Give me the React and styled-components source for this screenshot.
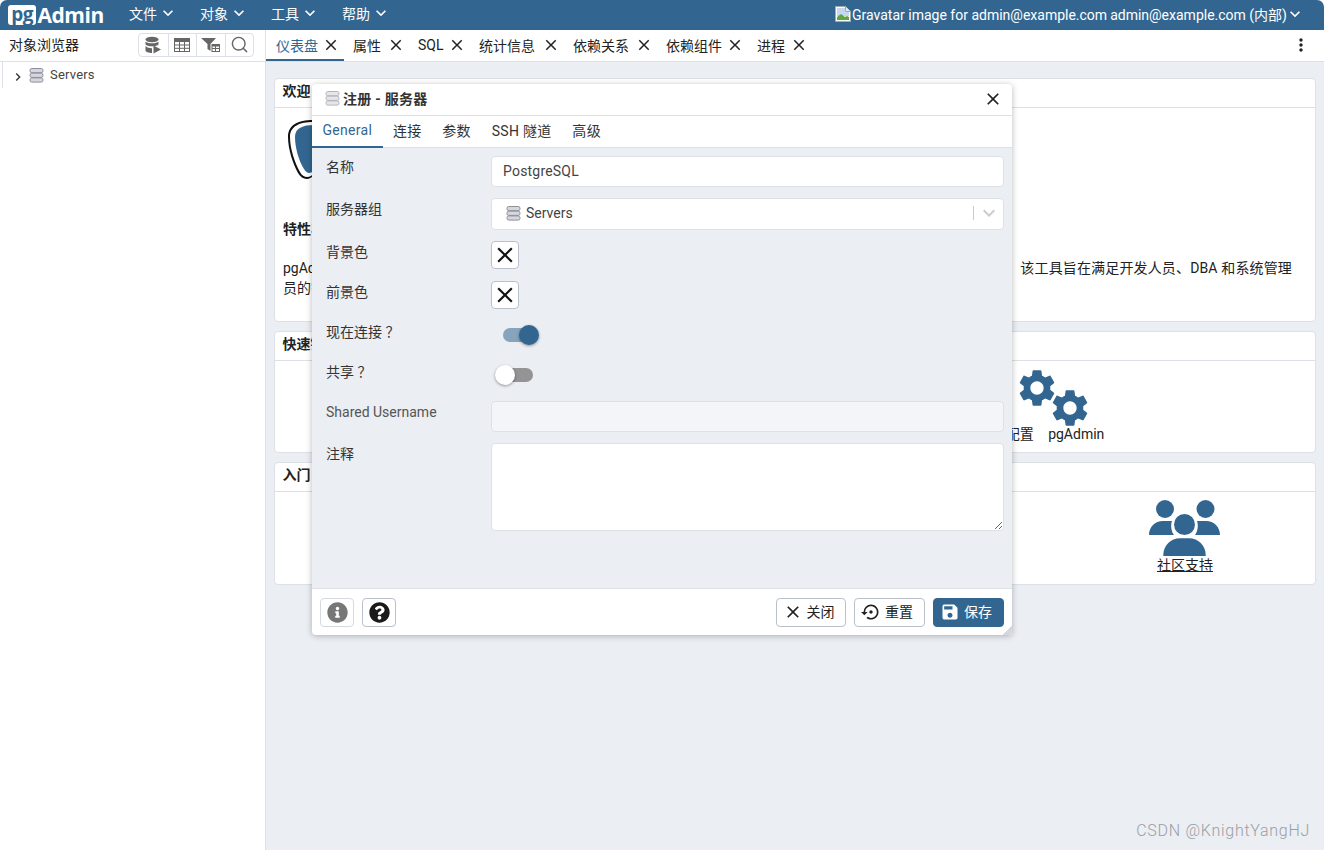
import React from 'react'
import styled, { createGlobalStyle } from 'styled-components'
import { FaInfoCircle, FaQuestionCircle, FaServer, FaBook, FaGlobe, FaRss } from 'react-icons/fa'
import { MdClose, MdExpandMore, MdChevronRight, MdMoreVert, MdSave, MdSettingsBackupRestore } from 'react-icons/md'
import { Search } from 'lucide-react'

const FONT = `Roboto, "Noto Sans CJK SC", sans-serif`
const PRIMARY = '#326690'
const BORDER = '#dde0e6'

const GlobalStyle = createGlobalStyle`
html, body {
    margin: 0;
    padding: 0;
    background: #fff;
}
* {
    box-sizing: border-box;
}
`

const Page = styled.div`
position: relative;
width: 1324px;
height: 850px;
overflow: hidden;
display: flex;
flex-direction: column;
font-family: ${FONT};
font-size: 14px;
color: #222;
background: #fff;
`

const TopBar = styled.header`
height: 30px;
flex: none;
display: flex;
align-items: center;
background: ${PRIMARY};
color: #fff;
border-radius: 7px 7px 0 0;
padding: 0 19px 2px 8px;
`
const Logo = styled.div`
display: flex;
align-items: center;
width: 96px;
margin: 2px 25px 0 0;
font: 700 21px "Open Sans", Roboto, sans-serif;
letter-spacing: -0.4px;
`
const LogoBox = styled.span`
display: flex;
align-items: center;
justify-content: center;
width: 29px;
height: 20px;
margin-right: 1px;
padding-bottom: 3px;
font-size: 19px;
background: #fff;
color: ${PRIMARY};
border-radius: 3px;
`
const Menu = styled.div`
display: flex;
align-items: center;
gap: 1px;
margin-right: 22px;
padding-bottom: 2px;
font-size: 14px;
svg {
    font-size: 20px;
}
`
const UserBox = styled.div`
margin-left: auto;
display: flex;
align-items: center;
white-space: nowrap;
svg.chevron {
    font-size: 20px;
    margin-left: -2px;
}
`
const BrokenImage = styled.span`
display: flex;
align-items: center;
margin-right: 1px;
`
const AltText = styled.span`
margin-right: 3px;
padding-top: 2px;
`

const Main = styled.div`
flex: 1;
display: flex;
min-height: 0;
`

const Browser = styled.aside`
width: 266px;
flex: none;
border-right: 1px solid ${BORDER};
display: flex;
flex-direction: column;
`
const BrowserHead = styled.div`
height: 32px;
display: flex;
align-items: center;
justify-content: space-between;
padding: 0 11px 2px 9px;
border-bottom: 1px solid ${BORDER};
`
const BrowserTitle = styled.span`
padding-bottom: 2px;
`
const ToolGroup = styled.div`
display: flex;
height: 24px;
border: 1px solid ${BORDER};
border-radius: 4px;
`
const ToolBtn = styled.div`
width: 28.5px;
display: flex;
align-items: center;
justify-content: center;
color: #666;
& + & {
    border-left: 1px solid ${BORDER};
}
`
const TreeRow = styled.div`
display: flex;
align-items: center;
height: 26px;
margin-left: 2px;
padding-left: 9px;
border-left: 1px solid ${BORDER};
font-size: 13px;
color: #444;
svg.arrow {
    font-size: 16px;
    color: #333;
    margin: 3px 3px 0 -2px;
}
span {
    margin-left: 6px;
    padding-bottom: 1px;
    letter-spacing: 0.2px;
}
`

const Content = styled.section`
flex: 1;
display: flex;
flex-direction: column;
min-width: 0;
background: #ebeef3;
`
const TabBar = styled.div`
height: 32px;
flex: none;
display: flex;
background: #fff;
border-bottom: 1px solid ${BORDER};
padding-right: 13px;
`
const Tab = styled.div`
width: ${({ $w }) => $w}px;
height: 31px;
display: flex;
align-items: center;
justify-content: space-between;
padding: 0 4px 2px ${({ $active }) => ($active ? 10 : 9)}px;
color: ${({ $active }) => ($active ? PRIMARY : '#222')};
box-shadow: ${({ $active }) => ($active ? `inset 0 -2px 0 ${PRIMARY}` : 'none')};
svg {
    font-size: 18px;
    color: #222;
}
`
const Kebab = styled.div`
margin-left: auto;
display: flex;
align-items: center;
font-size: 20px;
padding-bottom: 2px;
`
const Dashboard = styled.div`
display: flex;
flex-direction: column;
gap: 9px;
padding: 16px 8px 0;
`
const Card = styled.div`
background: #fff;
border: 1px solid ${BORDER};
border-radius: 4px;
`
const CardHead = styled.div`
height: 29px;
display: flex;
align-items: center;
padding: 0 0 6px 7.5px;
font-weight: 700;
border-bottom: 1px solid ${BORDER};
`
const WelcomeBody = styled.div`
padding: 12px 23px 23px 8px;
`
const LogoWrap = styled.div`
height: 60px;
margin-left: 5px;
`
const FeatureTitle = styled.div`
margin-top: 39px;
line-height: 20px;
font-weight: 700;
`
const Intro = styled.div`
margin-top: 19px;
line-height: 20px;
`
const IntroLine = styled.div`
display: flex;
justify-content: space-between;
`
const IntroTail = styled.span`
letter-spacing: 0.15px;
`
const LinkGrid = styled.div`
display: grid;
grid-template-columns: repeat(${({ $cols }) => $cols}, 1fr);
padding: ${({ $top }) => $top}px 0 8px;
`
const LinkItem = styled.div`
display: flex;
flex-direction: column;
align-items: center;
`
const IconSlot = styled.div`
height: 56px;
display: flex;
align-items: center;
justify-content: center;
color: ${PRIMARY};
font-size: 44px;
`
const LinkLabel = styled.div`
line-height: 20px;
word-spacing: ${({ $wide }) => ($wide ? '11px' : 'normal')};
`
const DocLink = styled.div`
line-height: 18px;
margin-bottom: 2px;
text-decoration: underline;
`

const Dialog = styled.div`
position: absolute;
left: 312px;
top: 84px;
width: 700px;
height: 551px;
display: flex;
flex-direction: column;
background: #fff;
border-radius: 4px;
box-shadow: 0 1px 6px rgba(0, 0, 0, 0.28);
overflow: hidden;
`
const DialogTitle = styled.div`
height: 32px;
flex: none;
display: flex;
align-items: center;
padding: 0 9px 2px 13px;
font-weight: 700;
color: #333;
border-bottom: 1px solid ${BORDER};
span {
    margin: 0 0 2px 3px;
    letter-spacing: 0.25px;
}
svg.close {
    margin-left: auto;
    font-size: 20px;
    color: #222;
}
`
const DialogTabs = styled.div`
height: 32px;
flex: none;
display: flex;
border-bottom: 1px solid ${BORDER};
`
const DialogTab = styled.div`
display: flex;
align-items: center;
padding: 0 10.4px 5px;
height: 32px;
letter-spacing: 0.3px;
color: ${({ $active }) => ($active ? PRIMARY : '#333')};
box-shadow: ${({ $active }) => ($active ? `inset 0 -2px 0 ${PRIMARY}` : 'none')};
`
const Form = styled.div`
flex: 1;
background: #ebeef3;
padding: 8px 8px 0 14px;
display: flex;
flex-direction: column;
gap: 11px;
`
const Row = styled.div`
display: grid;
grid-template-columns: 165px 1fr;
height: ${({ $h }) => $h}px;
`
const Label = styled.div`
line-height: 23px;
color: ${({ $muted }) => ($muted ? '#555' : '#333')};
`
const TextInput = styled.input`
width: 100%;
height: 100%;
font: 14px ${FONT};
letter-spacing: 0.2px;
color: #444;
padding: 0 11px 2px;
background: ${({ disabled }) => (disabled ? '#f3f5f9' : '#fff')};
border: 1px solid ${BORDER};
border-radius: 4px;
outline: none;
`
const TextArea = styled.textarea`
width: 100%;
height: 100%;
background: #fff;
border: 1px solid ${BORDER};
border-radius: 4px;
outline: none;
resize: vertical;
display: block;
`
const SelectBox = styled.div`
display: flex;
align-items: center;
padding: 0 0 2px 14px;
background: #fff;
border: 1px solid ${BORDER};
border-radius: 4px;
color: #444;
span {
    margin-left: 5px;
}
`
const SelectArrow = styled.div`
margin-left: auto;
display: flex;
align-items: center;
height: 14px;
width: 30px;
border-left: 1px solid #ccc;
padding-left: 3px;
color: #ccc;
font-size: 24px;
`
const ColorBtn = styled.div`
width: 28px;
height: 28px;
display: flex;
align-items: center;
justify-content: center;
background: #fff;
border: 1px solid #bac1cd;
border-radius: 4px;
color: #111;
font-size: 26px;
`
const SwitchWrap = styled.div`
position: relative;
width: 34px;
height: 14px;
margin-top: 7px;
margin-left: ${({ $on }) => ($on ? '12px' : '8px')};
border-radius: 7px;
background: ${({ $on }) => ($on ? '#86a5bd' : '#949494')};
`
const Thumb = styled.div`
position: absolute;
top: -3px;
left: ${({ $on }) => ($on ? '16px' : '-4px')};
width: 20px;
height: 20px;
border-radius: 50%;
background: ${({ $on }) => ($on ? PRIMARY : '#fff')};
box-shadow: 0 1px 3px rgba(0, 0, 0, 0.4);
`
const Footer = styled.div`
height: 47px;
flex: none;
position: relative;
display: flex;
align-items: center;
gap: 8px;
padding: 1px 8px 0;
border-top: 1px solid ${BORDER};
`
const IconBtn = styled.div`
width: 34px;
height: 29px;
display: flex;
align-items: center;
justify-content: center;
background: #fff;
border: 1px solid ${({ $strong }) => ($strong ? '#bac1cd' : '#d5d9e0')};
border-radius: 4px;
color: ${({ $strong }) => ($strong ? '#1a1a1a' : '#777')};
font-size: 21px;
`
const FootBtn = styled.div`
width: ${({ $w }) => $w}px;
height: 29px;
display: flex;
align-items: center;
justify-content: center;
gap: 4px;
padding: 0 5px 1px 0;
border-radius: 4px;
border: 1px solid ${({ $primary }) => ($primary ? PRIMARY : '#bac1cd')};
background: ${({ $primary }) => ($primary ? PRIMARY : '#fff')};
color: ${({ $primary }) => ($primary ? '#fff' : '#222')};
svg {
    font-size: 20px;
}
`
const BtnText = styled.span`
margin-bottom: 3px;
`
const Spacer = styled.div`
flex: 1;
`
const ResizeCorner = styled.div`
position: absolute;
right: 0;
bottom: 0;
width: 10px;
height: 10px;
background: linear-gradient(135deg, transparent 50%, #d4d7dc 50%);
`
const Watermark = styled.div`
position: absolute;
right: 14px;
top: 821px;
font-size: 16px;
font-weight: 300;
line-height: 19px;
color: #9a9ea4;
letter-spacing: 0.72px;
`

const GEAR = 'M19.14 12.94c.04-.3.06-.61.06-.94 0-.32-.02-.64-.07-.94l2.03-1.58c.18-.14.23-.41.12-.61l-1.92-3.32c-.12-.22-.37-.29-.59-.22l-2.39.96c-.5-.38-1.03-.7-1.62-.94l-.36-2.54c-.04-.24-.24-.41-.48-.41h-3.84c-.24 0-.43.17-.47.41l-.36 2.54c-.59.24-1.13.57-1.62.94l-2.39-.96c-.22-.08-.47 0-.59.22L2.74 8.87c-.12.21-.08.47.12.61l2.03 1.58c-.05.3-.09.63-.09.94s.02.64.07.94l-2.03 1.58c-.18.14-.23.41-.12.61l1.92 3.32c.12.22.37.29.59.22l2.39-.96c.5.38 1.03.7 1.62.94l.36 2.54c.05.24.24.41.48.41h3.84c.24 0 .44-.17.47-.41l.36-2.54c.59-.24 1.13-.56 1.62-.94l2.39.96c.22.08.47 0 .59-.22l1.92-3.32c.12-.22.07-.47-.12-.61l-2.01-1.58zM12 15.6c-1.98 0-3.6-1.62-3.6-3.6s1.62-3.6 3.6-3.6 3.6 1.62 3.6 3.6-1.62 3.6-3.6 3.6z'

const ServerIcon = ({ light }) => (
    <svg width="15" height="15" viewBox="0 0 15 15">
        {[0.5, 5.2, 9.9].map((y) => (
            <rect key={y} x="1" y={y} width="13" height="4.2" rx="1.8"
                fill={light ? '#e6e6ea' : '#d6d6de'} stroke={light ? '#b4b4bc' : '#8f8f9c'} strokeWidth="1" />
        ))}
    </svg>
)

const DbPlayIcon = () => (
    <svg width="18" height="18" viewBox="0 0 18 18" fill="#666">
        <ellipse cx="8" cy="3.5" rx="6.5" ry="2.8" />
        <path d="M1.5 5.5c1.5 2.4 11.5 2.4 13 0v3c-1.5 2.4-11.5 2.4-13 0z" />
        <path d="M1.5 10c1.5 2 5 2.3 6.5 2.2V17c-3 0-6.500-.8-6.500-2.700z" />
        <path d="M9.500 9.500l7.500 4-7.500 4z" />
    </svg>
)
const TableIcon = () => (
    <svg width="16" height="14" viewBox="0 0 16 14" fill="none" stroke="#666" strokeWidth="1">
        <rect x="0.500" y="0.500" width="15" height="13" fill="#fff" />
        <rect x="0.500" y="0.500" width="15" height="3" fill="#666" />
        <path d="M0.500 7h15M0.500 10.300h15M5.500 3.500v10M10.500 3.500v10" />
    </svg>
)
const FilterTableIcon = () => (
    <svg width="20" height="16" viewBox="0 0 20 16" fill="#666">
        <path d="M0 1h15l-5.500 6v7l-3-2V7z" />
        <path d="M10.500 7h8.500v8h-8.500zM11.500 9.500v1.500h2.500V9.500zM15 9.500v1.500h3V9.500zM11.500 12v2h2.500v-2zM15 12v2h3v-2z" fillRule="evenodd" />
    </svg>
)
const BrokenImageIcon = () => (
    <svg width="16" height="16" viewBox="0 0 16 16">
        <path d="M0.500 0.500h10l5 5v10h-15z" fill="#fff" stroke="#a8a8a8" />
        <path d="M2 2h8v4h4v4H2z" fill="#c4d6f2" />
        <path d="M2 14v-3l4-3 4 3 2-1 2 1v3z" fill="#5fa63f" />
        <path d="M10.500 0.500v5h5" fill="#e8e8e8" stroke="#a8a8a8" />
    </svg>
)
const ElephantLogo = () => (
    <svg width="60" height="60" viewBox="0 0 60 60">
        <path d="M25 0C10 0 0 5 0 17c0 12 5 27 10 36 4 7 11 8 16 2l34 0V0z" fill="#111" />
        <path d="M25 2C12 2 2 6 2 17c0 12 5 26 10 35 3 6 10 7 14 1l34 0V2z" fill="#fff" />
        <path d="M26 5C15 5 7 8 7 17c0 11 4 24 9 32 3 5 7 5 10 1l34 0V5z" fill={PRIMARY} />
    </svg>
)
const GearsIcon = () => (
    <svg width="76" height="56" viewBox="0 0 76 56" overflow="visible" fill={PRIMARY}>
        <path d={GEAR} transform="translate(20 20) scale(1.85) translate(-12 -12)" />
        <path d={GEAR} transform="translate(53 40) scale(1.85) translate(-12 -12)" />
    </svg>
)
const PeopleIcon = () => (
    <svg width="72" height="56" viewBox="0 0 72 56" fill={PRIMARY}>
        <circle cx="16" cy="9" r="9" />
        <circle cx="56.500" cy="9" r="9" />
        <circle cx="35.500" cy="24.500" r="10.500" />
        <path d="M0 35C0 27 6 21 14 21h9c-1.500 4-1 10 2 14z" />
        <path d="M71 35c0-8-6-14-14-14h-9c1.500 4 1 10-2 14z" />
        <path d="M14.300 56v-1c0-9.500 7.700-16.700 16.700-16.700h9c9 0 16.700 7.200 16.700 16.700v1z" />
    </svg>
)

const menus = ['文件', '对象', '工具', '帮助']
const tabs = [
    { label: '仪表盘', w: 78 },
    { label: '属性', w: 65 },
    { label: 'SQL', w: 61 },
    { label: '统计信息', w: 94 },
    { label: '依赖关系', w: 93 },
    { label: '依赖组件', w: 91 },
    { label: '进程', w: 64 },
]
const dialogTabs = ['General', '连接', '参数', 'SSH 隧道', '高级']

const App = () => {
    return (
        <Page>
            <GlobalStyle />
            <TopBar>
                <Logo><LogoBox>pg</LogoBox>Admin</Logo>
                {menus.map((m) => (
                    <Menu key={m}>{m}<MdExpandMore /></Menu>
                ))}
                <UserBox>
                    <BrokenImage><BrokenImageIcon /></BrokenImage>
                    <AltText>Gravatar image for admin@example.com</AltText>
                    admin@example.com (内部)
                    <MdExpandMore className="chevron" />
                </UserBox>
            </TopBar>
            <Main>
                <Browser>
                    <BrowserHead>
                        <BrowserTitle>对象浏览器</BrowserTitle>
                        <ToolGroup>
                            <ToolBtn><DbPlayIcon /></ToolBtn>
                            <ToolBtn><TableIcon /></ToolBtn>
                            <ToolBtn><FilterTableIcon /></ToolBtn>
                            <ToolBtn><Search size={19} strokeWidth={1.8} /></ToolBtn>
                        </ToolGroup>
                    </BrowserHead>
                    <TreeRow>
                        <MdChevronRight className="arrow" />
                        <ServerIcon />
                        <span>Servers</span>
                    </TreeRow>
                </Browser>
                <Content>
                    <TabBar>
                        {tabs.map((t, i) => (
                            <Tab key={t.label} $w={t.w} $active={i === 0}>{t.label}<MdClose /></Tab>
                        ))}
                        <Kebab><MdMoreVert /></Kebab>
                    </TabBar>
                    <Dashboard>
                        <Card>
                            <CardHead>欢迎</CardHead>
                            <WelcomeBody>
                                <LogoWrap><ElephantLogo /></LogoWrap>
                                <FeatureTitle>特性丰富</FeatureTitle>
                                <Intro>
                                    <IntroLine>
                                        <span>pgAdmin 是 PostgreSQL 开源数据库的管理和开发平台。</span>
                                        <IntroTail>该工具旨在满足开发人员、DBA 和系统管理</IntroTail>
                                    </IntroLine>
                                    <div>员的需</div>
                                </Intro>
                            </WelcomeBody>
                        </Card>
                        <Card>
                            <CardHead>快速链接</CardHead>
                            <LinkGrid $cols={2} $top={7}>
                                <LinkItem>
                                    <IconSlot><FaServer /></IconSlot>
                                    <LinkLabel>添加新服务器</LinkLabel>
                                </LinkItem>
                                <LinkItem>
                                    <IconSlot><GearsIcon /></IconSlot>
                                    <LinkLabel $wide>配置 pgAdmin</LinkLabel>
                                </LinkItem>
                            </LinkGrid>
                        </Card>
                        <Card>
                            <CardHead>入门</CardHead>
                            <LinkGrid $cols={4} $top={8}>
                                <LinkItem>
                                    <IconSlot><FaBook /></IconSlot>
                                    <DocLink>PostgreSQL 文档</DocLink>
                                </LinkItem>
                                <LinkItem>
                                    <IconSlot><FaGlobe /></IconSlot>
                                    <DocLink>pgAdmin 网站</DocLink>
                                </LinkItem>
                                <LinkItem>
                                    <IconSlot><FaRss /></IconSlot>
                                    <DocLink>规划新闻</DocLink>
                                </LinkItem>
                                <LinkItem>
                                    <IconSlot><PeopleIcon /></IconSlot>
                                    <DocLink>社区支持</DocLink>
                                </LinkItem>
                            </LinkGrid>
                        </Card>
                    </Dashboard>
                </Content>
            </Main>

            <Dialog>
                <DialogTitle>
                    <ServerIcon light />
                    <span>注册 - 服务器</span>
                    <MdClose className="close" />
                </DialogTitle>
                <DialogTabs>
                    {dialogTabs.map((t, i) => (
                        <DialogTab key={t} $active={i === 0}>{t}</DialogTab>
                    ))}
                </DialogTabs>
                <Form>
                    <Row $h={31}>
                        <Label>名称</Label>
                        <TextInput readOnly value="PostgreSQL" />
                    </Row>
                    <Row $h={32}>
                        <Label>服务器组</Label>
                        <SelectBox>
                            <ServerIcon />
                            <span>Servers</span>
                            <SelectArrow><MdExpandMore /></SelectArrow>
                        </SelectBox>
                    </Row>
                    <Row $h={29}>
                        <Label>背景色</Label>
                        <ColorBtn><MdClose /></ColorBtn>
                    </Row>
                    <Row $h={29}>
                        <Label>前景色</Label>
                        <ColorBtn><MdClose /></ColorBtn>
                    </Row>
                    <Row $h={29}>
                        <Label>现在连接 ？</Label>
                        <SwitchWrap $on><Thumb $on /></SwitchWrap>
                    </Row>
                    <Row $h={29}>
                        <Label>共享 ？</Label>
                        <SwitchWrap><Thumb /></SwitchWrap>
                    </Row>
                    <Row $h={31}>
                        <Label $muted>Shared Username</Label>
                        <TextInput disabled />
                    </Row>
                    <Row $h={88}>
                        <Label>注释</Label>
                        <TextArea readOnly />
                    </Row>
                </Form>
                <Footer>
                    <IconBtn><FaInfoCircle /></IconBtn>
                    <IconBtn $strong><FaQuestionCircle /></IconBtn>
                    <Spacer />
                    <FootBtn $w={70}><MdClose /><BtnText>关闭</BtnText></FootBtn>
                    <FootBtn $w={71}><MdSettingsBackupRestore /><BtnText>重置</BtnText></FootBtn>
                    <FootBtn $w={71} $primary><MdSave /><BtnText>保存</BtnText></FootBtn>
                    <ResizeCorner />
                </Footer>
            </Dialog>

            <Watermark>CSDN @KnightYangHJ</Watermark>
        </Page>
    )
}

export default App
